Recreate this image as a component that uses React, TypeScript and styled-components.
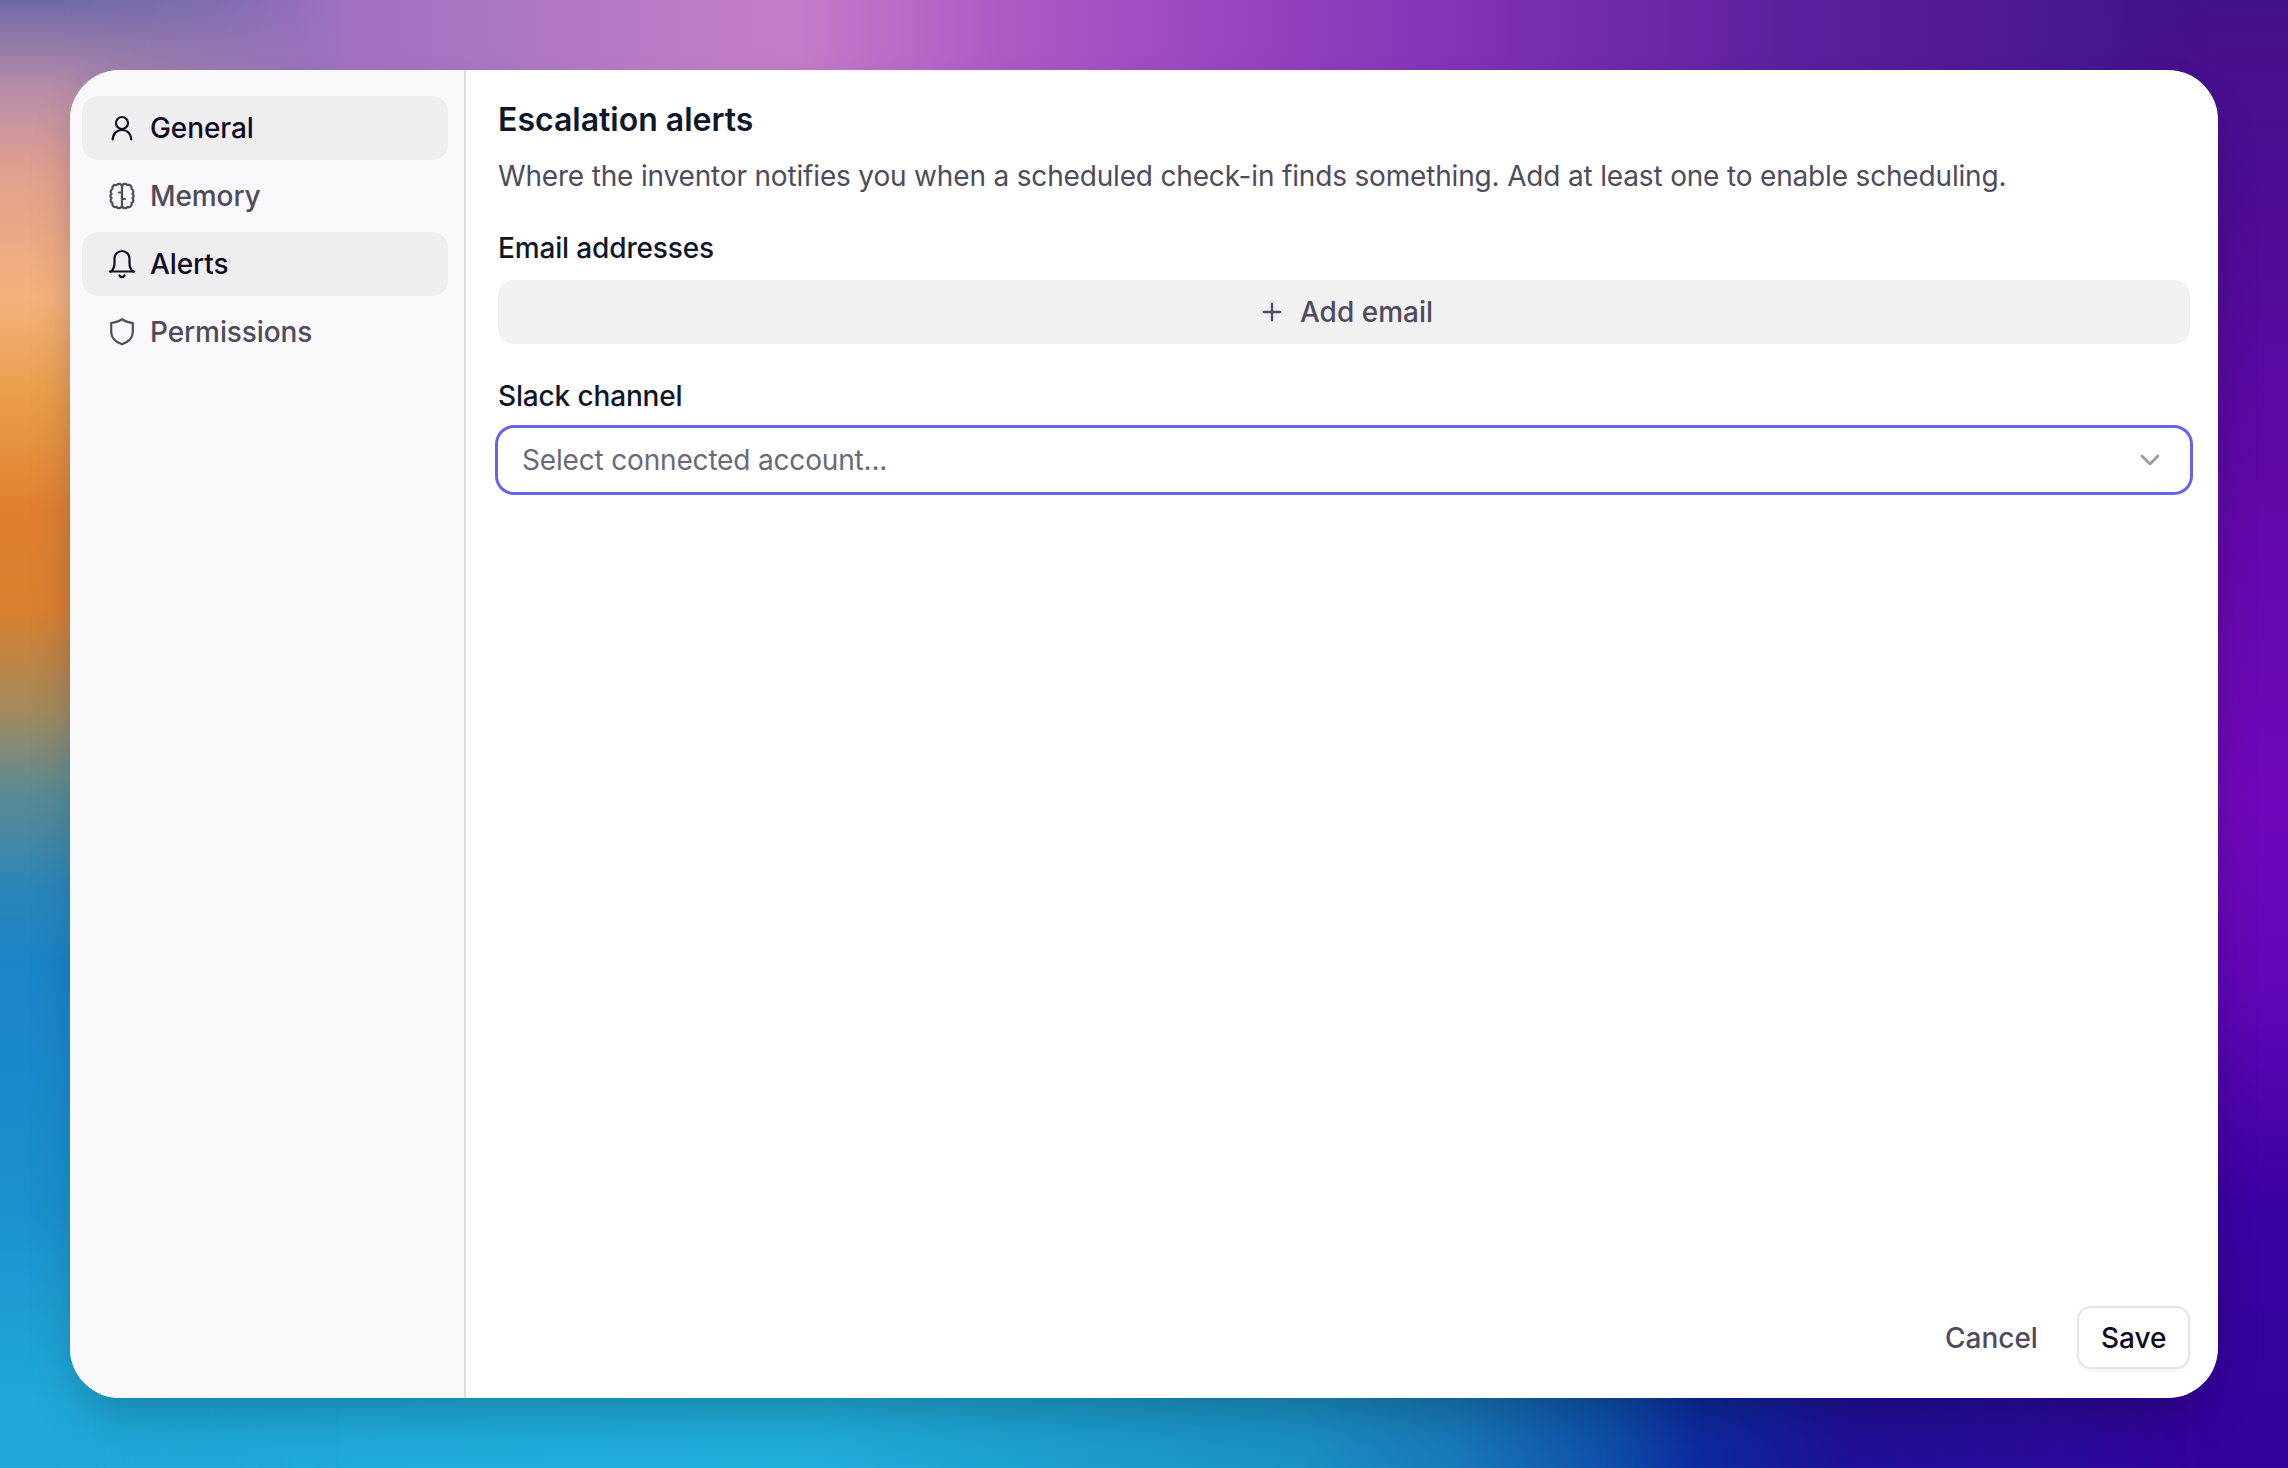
import styled, { createGlobalStyle } from 'styled-components';
import { ChevronDown, Plus } from 'lucide-react';
import type { ReactNode } from 'react';

const GlobalStyle = createGlobalStyle`
  html, body {
    margin: 0;
    padding: 0;
  }

  body {
    font-family: Inter, "Liberation Sans", sans-serif;
    -webkit-font-smoothing: antialiased;
  }
`;

const Page = styled.div`
  position: relative;
  box-sizing: border-box;
  width: 2288px;
  height: 1468px;
  padding: 70px;
  overflow: hidden;
  background:
    linear-gradient(
        to right,
        #7470ab 0,
        #9a70be 300px,
        #bd7dc6 700px,
        #c37cc8 800px,
        #ad5bc4 1000px,
        #9a48c0 1200px,
        #7c30b4 1500px,
        #5a1f9e 1800px,
        #471690 2100px,
        #3f1088 2288px
      )
      top / 100% 50% no-repeat,
    linear-gradient(
        to right,
        #1ea9d8 0,
        #20aedb 800px,
        #1a90c4 1300px,
        #1878b8 1460px,
        #0f50aa 1605px,
        #0d2a9e 1700px,
        #1f0f98 1850px,
        #36049a 2288px
      )
      bottom / 100% 50% no-repeat;

  &::before,
  &::after {
    content: '';
    position: absolute;
    top: 0;
    bottom: 0;
  }

  &::before {
    left: 0;
    width: 340px;
    background: linear-gradient(
      to bottom,
      #7069a8 0,
      #b88da8 90px,
      #e0a090 170px,
      #f4b27c 300px,
      #ea9e4a 395px,
      #e08030 510px,
      #d8802f 610px,
      #a08a60 715px,
      #5a8a94 795px,
      #2a86b8 890px,
      #1a84c8 965px,
      #1a90cc 1200px,
      #20a8d8 1400px,
      #1ea9d8 1468px
    );
    mask-image: linear-gradient(to right, #000 15%, transparent);
  }

  &::after {
    right: 0;
    width: 200px;
    background: linear-gradient(
      to bottom,
      #43128a 0,
      #4d0c94 200px,
      #5f08a8 500px,
      #6f08ba 800px,
      #5e06b4 1000px,
      #3a02a2 1200px,
      #31029a 1468px
    );
    mask-image: linear-gradient(to left, #000 35%, transparent);
  }
`;

const Dialog = styled.div`
  position: relative;
  z-index: 1;
  display: flex;
  height: 100%;
  overflow: hidden;
  background: #fff;
  border-radius: 50px;
  box-shadow: 0 25px 50px -12px rgba(0, 0, 0, 0.25);
`;

const Sidebar = styled.nav`
  box-sizing: border-box;
  flex: 0 0 396px;
  display: flex;
  flex-direction: column;
  gap: 4px;
  padding: 26px 16px 26px 12px;
  background: #f9f9fb;
  border-right: 2px solid #dedee3;
`;

const NavItem = styled.div<{ $active?: boolean }>`
  display: flex;
  align-items: center;
  gap: 12px;
  height: 64px;
  padding: 0 24px;
  border-radius: 16px;
  font-size: 28px;
  font-weight: 500;
  letter-spacing: -0.1px;
  color: ${(p) => (p.$active ? '#120b24' : '#4f4a5e')};
  background: ${(p) => (p.$active ? '#eeeef0' : 'transparent')};

  svg {
    flex: none;
    width: 32px;
    height: 32px;
    fill: none;
    stroke: currentColor;
    stroke-width: 2.2;
    stroke-linecap: round;
    stroke-linejoin: round;
  }
`;

const Main = styled.main`
  flex: 1;
  min-width: 0;
  box-sizing: border-box;
  display: flex;
  flex-direction: column;
  padding: 29px 28px 29px 32px;
`;

const Title = styled.h2`
  margin: 0;
  font-size: 32px;
  line-height: 42px;
  font-weight: 600;
  color: #0f172a;
`;

const Description = styled.p`
  margin: 14px 0 0;
  font-size: 28px;
  line-height: 42px;
  letter-spacing: -0.17px;
  color: #4f4a5e;
`;

const Label = styled.div<{ $top: number }>`
  margin-top: ${(p) => p.$top}px;
  font-size: 28px;
  line-height: 40px;
  font-weight: 500;
  letter-spacing: -0.15px;
  color: #0f172a;
`;

const AddButton = styled.button`
  display: flex;
  align-items: center;
  justify-content: center;
  gap: 14px;
  width: 100%;
  height: 64px;
  margin-top: 12px;
  padding: 0 0 0 3px;
  border: 0;
  border-radius: 16px;
  background: #f1f1f2;
  font: 500 28px Inter, "Liberation Sans", sans-serif;
  color: #4f4a5e;

  svg {
    width: 28px;
    height: 28px;
  }
`;

const Select = styled.div`
  box-sizing: border-box;
  display: flex;
  align-items: center;
  justify-content: space-between;
  height: 64px;
  margin-top: 12px;
  padding: 0 24px;
  border-radius: 16px;
  background: #fff;
  box-shadow: 0 0 0 3px #6563f0;
  font-size: 28px;
  letter-spacing: -0.17px;
  color: #6b6878;

  svg {
    width: 32px;
    height: 32px;
    color: #9a9a9f;
  }
`;

const Footer = styled.footer`
  margin-top: auto;
  display: flex;
  justify-content: flex-end;
  align-items: center;
  gap: 16px;
`;

const FooterButton = styled.button<{ $outlined?: boolean }>`
  box-sizing: border-box;
  height: 63px;
  padding: 0 21.5px;
  border-radius: 14px;
  border: 2px solid ${(p) => (p.$outlined ? '#e5e5e5' : 'transparent')};
  background: #fff;
  box-shadow: ${(p) => (p.$outlined ? '0 2px 4px rgba(0, 0, 0, 0.05)' : 'none')};
  font: 500 28px Inter, "Liberation Sans", sans-serif;
  color: ${(p) => (p.$outlined ? '#120b24' : '#4f4a5e')};
`;

const UserIcon = () => (
  <svg viewBox="0 0 32 32">
    <circle cx="16" cy="11" r="6" />
    <path d="M6.700 27.500c0-5.500 4-9.500 9.300-9.500s9.300 4 9.300 9.500" />
  </svg>
);

const BrainIcon = () => (
  <svg viewBox="0 0 32 32">
    <path d="M16 4.500v23" />
    <path d="M16 6.400A3 3 0 0 0 10.500 5.200 3 3 0 0 0 6.500 9 3 3 0 0 0 5.600 14 2.200 2.200 0 0 0 5.600 18 3 3 0 0 0 6.500 23 3 3 0 0 0 10.500 26.800 3 3 0 0 0 16 25.600" />
    <path d="M16 6.400A3 3 0 0 1 21.500 5.200 3 3 0 0 1 25.500 9 3 3 0 0 1 26.400 14 2.200 2.200 0 0 1 26.400 18 3 3 0 0 1 25.500 23 3 3 0 0 1 21.500 26.800 3 3 0 0 1 16 25.600" />
    <path d="M16 12.500h-3M16 19h3" />
  </svg>
);

const BellIcon = () => (
  <svg viewBox="0 0 32 32">
    <path d="M3.800 23.500h24.400" />
    <path d="M5 23.500c2.500-2 3.500-5 3.500-8.500v-4.500a7.500 7.500 0 0 1 15 0V15c0 3.500 1 6.500 3.500 8.500" />
    <path d="M13.500 27.500a2.700 2.700 0 0 0 5 0" />
  </svg>
);

const ShieldIcon = () => (
  <svg viewBox="0 0 32 32">
    <path d="M16 3.200c3 2.400 6 3.300 10.800 3.800v9c0 6-4.500 10-10.800 12.300C9.700 26 5.200 22 5.200 16V7C10 6.500 13 5.600 16 3.200z" />
  </svg>
);

const nav: { label: string; icon: ReactNode; active?: boolean }[] = [
  { label: 'General', icon: <UserIcon />, active: true },
  { label: 'Memory', icon: <BrainIcon /> },
  { label: 'Alerts', icon: <BellIcon />, active: true },
  { label: 'Permissions', icon: <ShieldIcon /> },
];

export default function App() {
  return (
    <>
      <GlobalStyle />
      <Page>
        <Dialog>
          <Sidebar>
            {nav.map((item) => (
              <NavItem key={item.label} $active={item.active}>
                {item.icon}
                {item.label}
              </NavItem>
            ))}
          </Sidebar>
          <Main>
            <Title>Escalation alerts</Title>
            <Description>
              Where the inventor notifies you when a scheduled check-in finds something. Add at least one to enable scheduling.
            </Description>
            <Label $top={31}>Email addresses</Label>
            <AddButton>
              <Plus strokeWidth={2} />
              Add email
            </AddButton>
            <Label $top={32}>Slack channel</Label>
            <Select>
              Select connected account...
              <ChevronDown strokeWidth={2} />
            </Select>
            <Footer>
              <FooterButton>Cancel</FooterButton>
              <FooterButton $outlined>Save</FooterButton>
            </Footer>
          </Main>
        </Dialog>
      </Page>
    </>
  );
}
